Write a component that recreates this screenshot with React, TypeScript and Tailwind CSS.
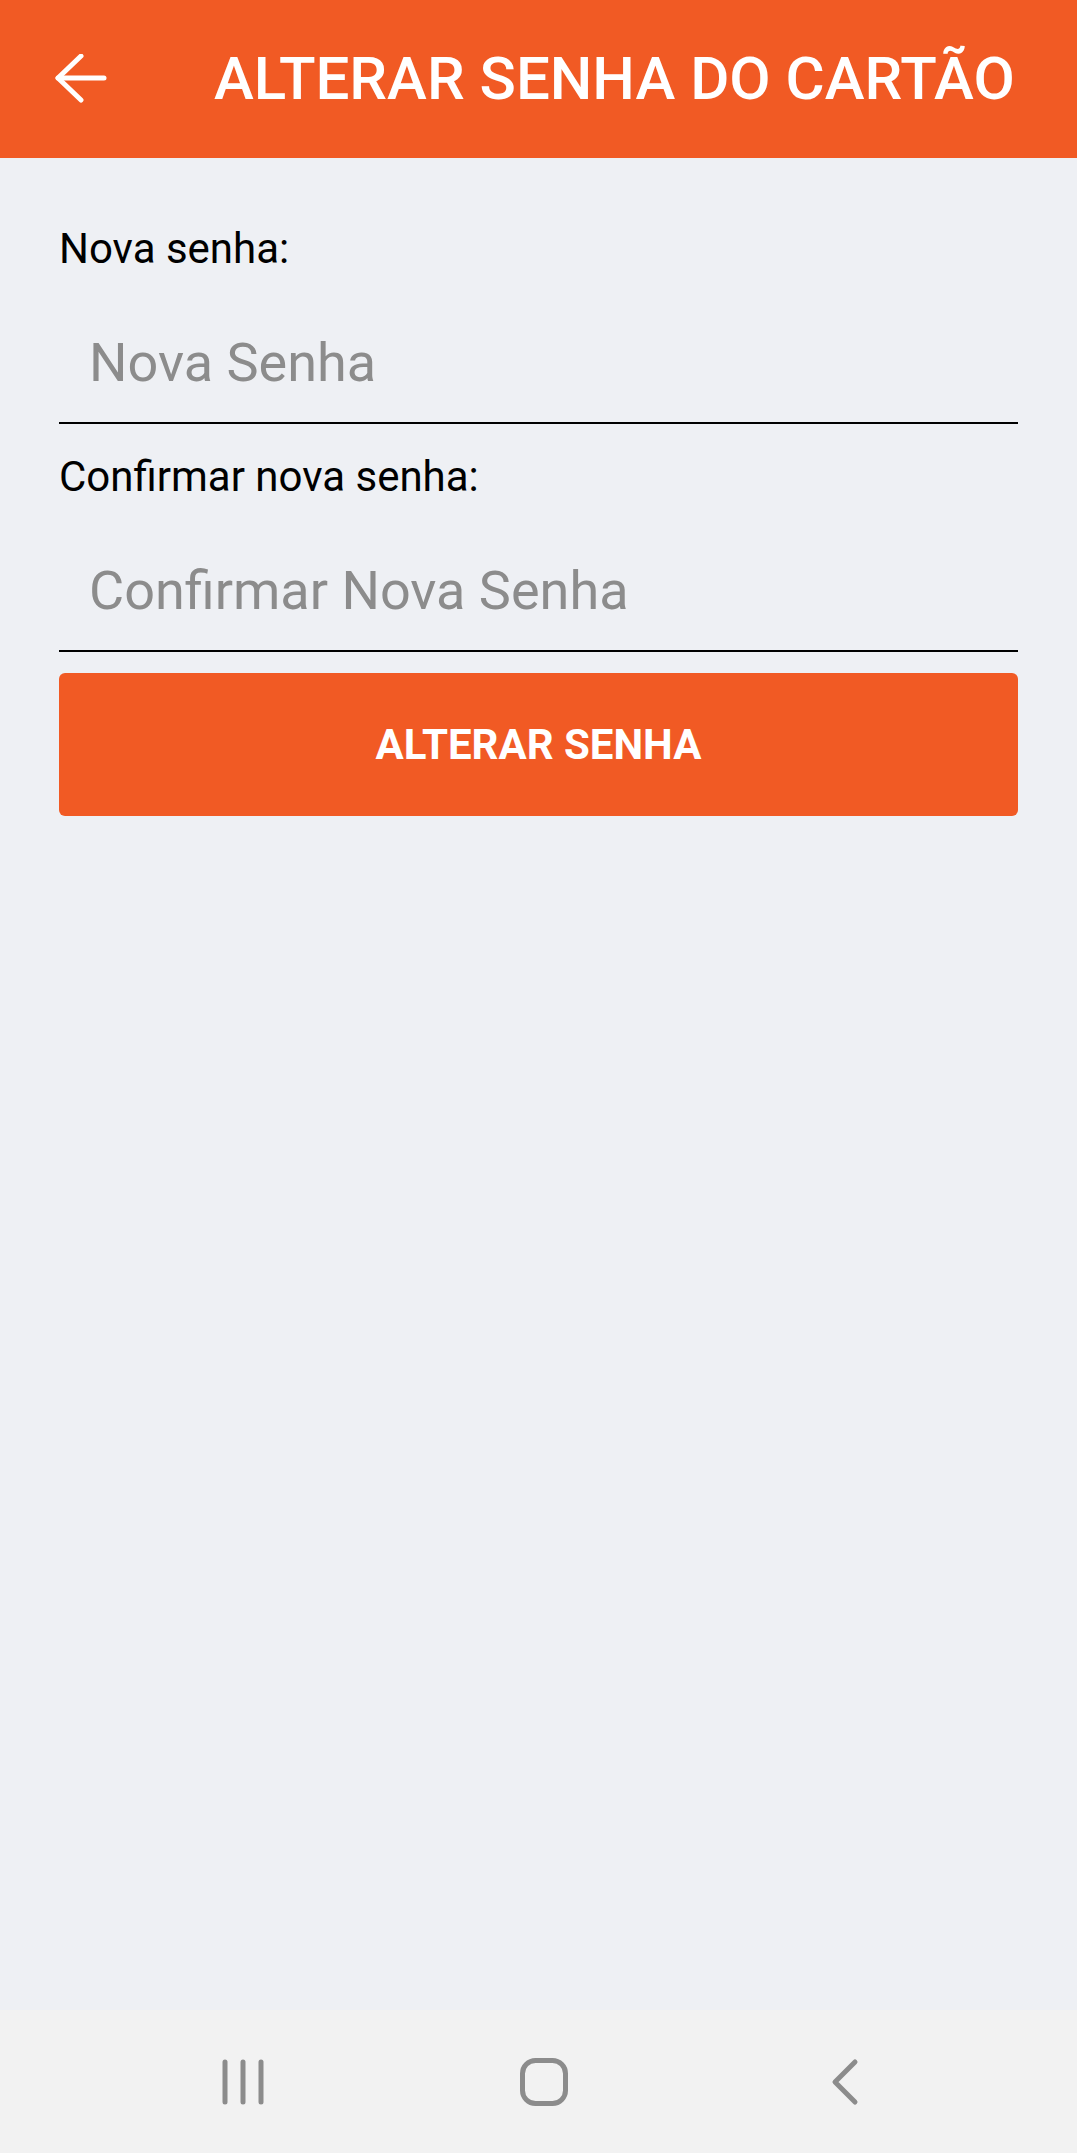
import React, { useState } from 'react';

const font = { fontFamily: 'Roboto, "Noto Sans", sans-serif' };

const BackArrow = () => (
  <svg width="52" height="50" viewBox="0 0 52 50" fill="none" stroke="white" strokeWidth="5" strokeLinecap="round" strokeLinejoin="round">
    <path d="M3 24H49" />
    <path d="M26 2L3 24L26 46" />
  </svg>
);

const Field = ({ label, placeholder, value, onChange, first }: { label: string; placeholder: string; value: string; onChange: (v: string) => void; first?: boolean }) => (
  <div className={first ? 'mt-[70px]' : 'mt-[32px]'}>
    <div className="text-[42px] leading-none text-black">{label}</div>
    <input
      type="password"
      value={value}
      onChange={(e) => onChange(e.target.value)}
      placeholder={placeholder}
      className="block w-full h-[154px] pt-[33px] pl-[30px] text-[54px] leading-none text-black placeholder:text-[#8c8c8c] border-b-2 border-black outline-none"
    />
  </div>
);

export default function App() {
  const [pass, setPass] = useState('');
  const [confirm, setConfirm] = useState('');

  return (
    <div className="w-[1077px] h-[2153px] flex flex-col bg-[#eef0f4]" style={font}>
      <header className="h-[158px] shrink-0 bg-[#f15a24] flex items-center">
        <button className="ml-[55px] flex items-center">
          <BackArrow />
        </button>
        <h1 className="ml-[107px] text-[60px] leading-none font-medium text-white">ALTERAR SENHA DO CARTÃO</h1>
      </header>

      <main className="flex-1 px-[59px]">
        <Field first label="Nova senha:" placeholder="Nova Senha" value={pass} onChange={setPass} />
        <Field label="Confirmar nova senha:" placeholder="Confirmar Nova Senha" value={confirm} onChange={setConfirm} />
        <button className="mt-[21px] w-full h-[143px] rounded-[6px] bg-[#f15a24] text-white text-[42px] font-bold leading-none">
          ALTERAR SENHA
        </button>
      </main>

      <nav className="h-[143px] shrink-0 bg-[#f2f2f2] flex items-center pl-[193px] gap-[201px]">
        <div className="w-[100px] flex justify-center">
          <svg width="46" height="48" viewBox="0 0 46 48" fill="none" stroke="#8c8c8c" strokeWidth="5" strokeLinecap="round">
            <path d="M5 4V44" />
            <path d="M23 4V44" />
            <path d="M41 4V44" />
          </svg>
        </div>
        <div className="w-[100px] flex justify-center">
          <svg width="50" height="50" viewBox="0 0 50 50" fill="none" stroke="#8c8c8c" strokeWidth="5">
            <rect x="3.5" y="3.5" width="43" height="43" rx="13" />
          </svg>
        </div>
        <div className="w-[100px] flex justify-center">
          <svg width="30" height="48" viewBox="0 0 30 48" fill="none" stroke="#8c8c8c" strokeWidth="5" strokeLinecap="round" strokeLinejoin="round">
            <path d="M25 4L5 24L25 44" />
          </svg>
        </div>
      </nav>
    </div>
  );
}
